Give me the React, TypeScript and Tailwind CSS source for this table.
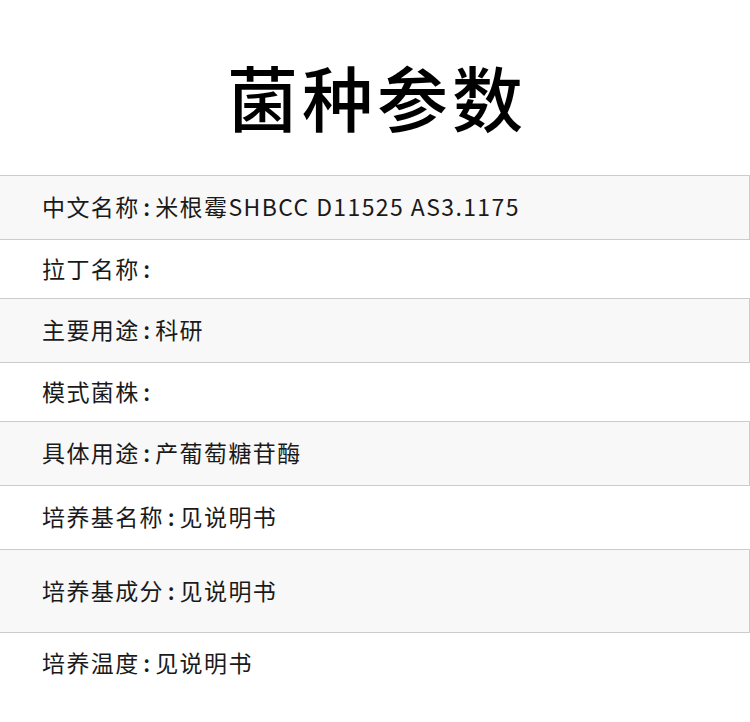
import React from "react";

const rows: { label: string; value: string; gray: boolean; h: string }[] = [
  { label: "中文名称", value: "米根霉SHBCC D11525 AS3.1175", gray: true, h: "h-[65px]" },
  { label: "拉丁名称", value: "", gray: false, h: "h-[58px]" },
  { label: "主要用途", value: "科研", gray: true, h: "h-[65px]" },
  { label: "模式菌株", value: "", gray: false, h: "h-[58px]" },
  { label: "具体用途", value: "产葡萄糖苷酶", gray: true, h: "h-[65px]" },
  { label: "培养基名称", value: "见说明书", gray: false, h: "h-[63px]" },
  { label: "培养基成分", value: "见说明书", gray: true, h: "h-[84px]" },
  { label: "培养温度", value: "见说明书", gray: false, h: "h-[60px]" },
];

export default function App() {
  return (
    <div
      className="w-[750px] h-[722px] bg-white overflow-hidden text-[#1a1a1a]"
      style={{ fontFamily: '"Noto Sans CJK SC", "Noto Sans", sans-serif' }}
    >
      <div className="h-[175px] flex justify-center pt-[60px]">
        <h1 className="text-[71px] leading-none font-medium tracking-[4px] text-black pl-[4px]">
          菌种参数
        </h1>
      </div>
      {rows.map((r, i) => (
        <div
          key={i}
          className={
            r.gray
              ? `${r.h} flex items-center pl-[42px] bg-[#f8f8f8] border-y border-r border-[#cccccc]`
              : `${r.h} flex items-center pl-[42px]`
          }
        >
          <div className="flex items-center text-[23px] leading-none tracking-[1.4px] -mt-[2px]">
            <span>{r.label}</span>
            <span className="inline-block w-[17px] -ml-[1.4px] text-center tracking-normal font-medium">:</span>
            <span>{r.value}</span>
          </div>
        </div>
      ))}
    </div>
  );
}
